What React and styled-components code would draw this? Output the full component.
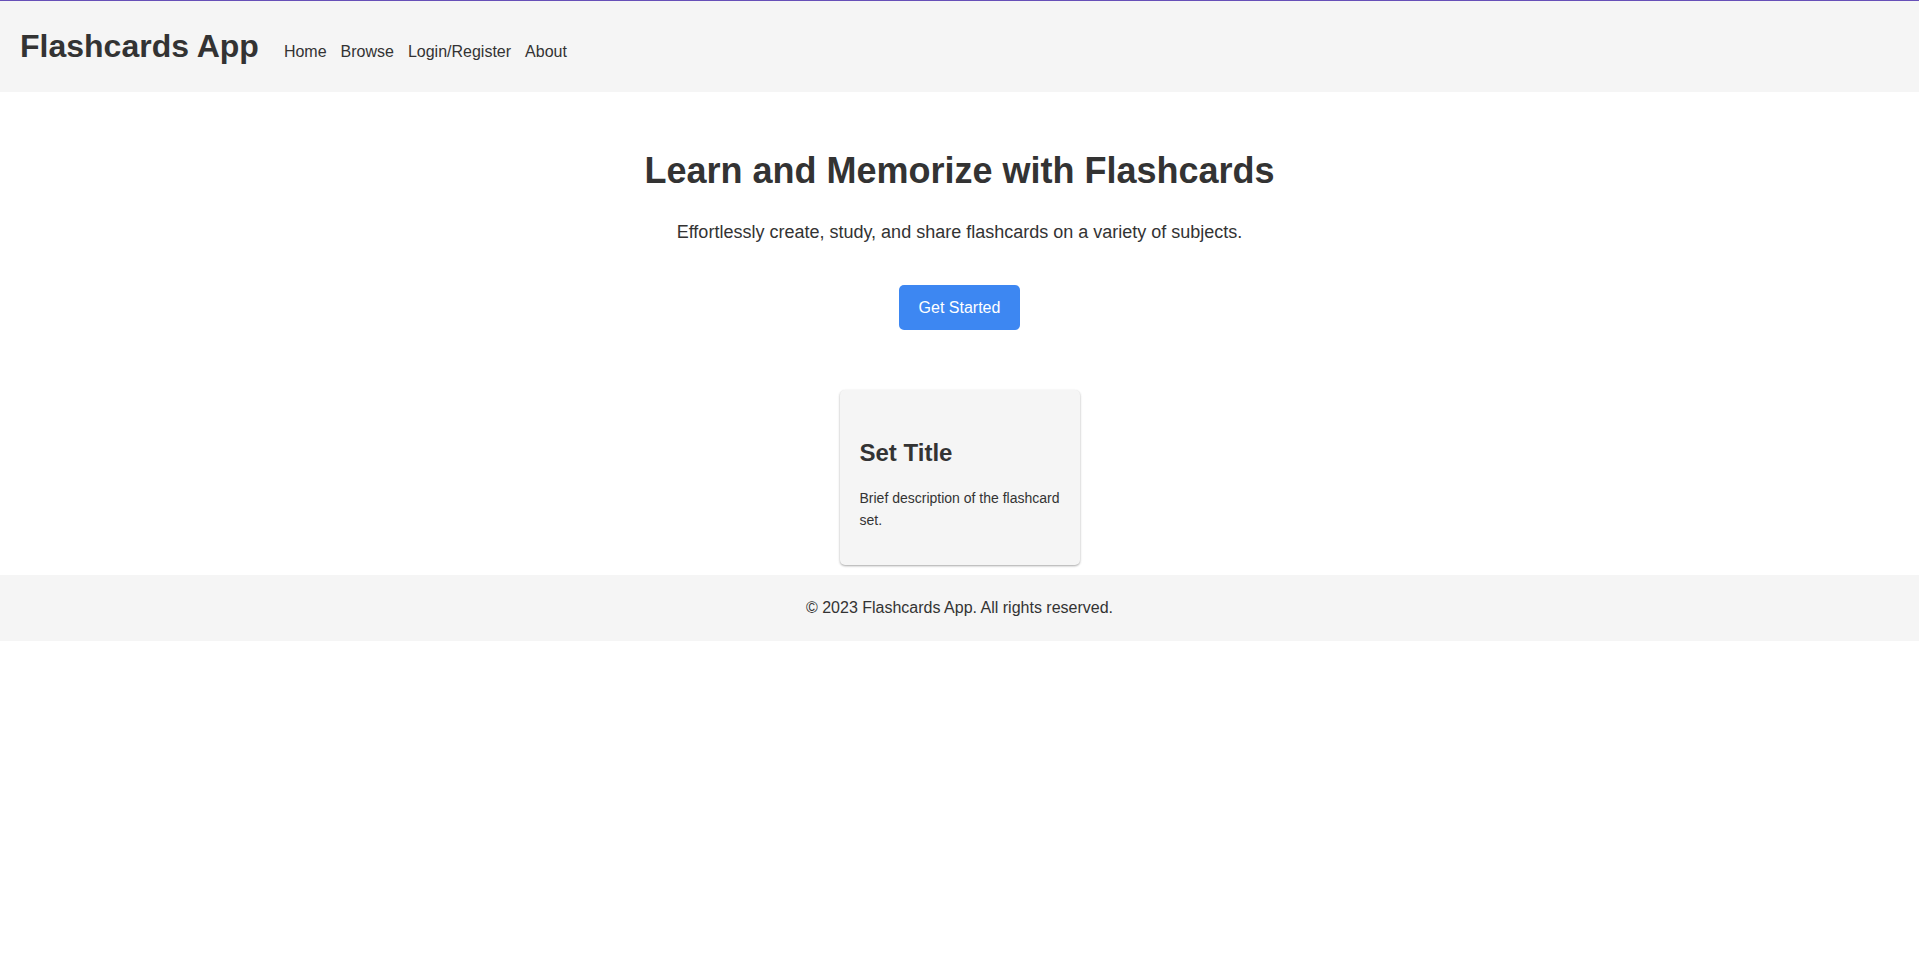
import React from "react";
import styled, { createGlobalStyle } from "styled-components";

const GlobalStyle = createGlobalStyle`
  * {
    box-sizing: border-box;
  }
  body {
    margin: 0;
    background: #ffffff;
    color: #333333;
    font-family: Arial, "Liberation Sans", sans-serif;
    font-size: 16px;
    line-height: 26px;
  }
`;

const Header = styled.header`
  display: flex;
  align-items: baseline;
  gap: 25px;
  padding: 20px;
  border-top: 1px solid #6750b8;
  background: #f5f5f5;
`;

const Brand = styled.h1`
  margin: 0;
  font-size: 32px;
  line-height: 51px;
`;

const Nav = styled.nav`
  display: flex;
  gap: 14px;
`;

const NavLink = styled.a`
  color: inherit;
  text-decoration: none;
`;

const Hero = styled.section`
  display: flex;
  flex-direction: column;
  align-items: center;
  padding: 50px 20px 60px;
  text-align: center;
`;

const HeroTitle = styled.h2`
  margin: 0 0 18px;
  font-size: 36px;
  line-height: 58px;
`;

const HeroText = styled.p`
  margin: 0 0 38px;
  font-size: 18px;
  line-height: 29px;
`;

const Button = styled.button`
  padding: 10px 20px;
  border: none;
  border-radius: 5px;
  background: #3d87f2;
  color: #ffffff;
  font: inherit;
  line-height: 25px;
  cursor: pointer;
`;

const CardList = styled.section`
  display: flex;
  flex-wrap: wrap;
  justify-content: center;
  gap: 20px;
  padding-bottom: 10px;
`;

const Card = styled.article`
  width: 240px;
  padding: 44px 20px 34px;
  border-radius: 5px;
  background: #f5f5f5;
  box-shadow: 0 1px 3px rgba(0, 0, 0, 0.12), 0 1px 2px rgba(0, 0, 0, 0.24);
`;

const CardTitle = styled.h3`
  margin: 0 0 15px;
  font-size: 24px;
  line-height: 38px;
`;

const CardText = styled.p`
  margin: 0;
  font-size: 14px;
  line-height: 22px;
`;

const Footer = styled.footer`
  padding: 20px;
  background: #f5f5f5;
  text-align: center;
`;

const links = ["Home", "Browse", "Login/Register", "About"];

export default function App() {
  return (
    <>
      <GlobalStyle />
      <Header>
        <Brand>Flashcards App</Brand>
        <Nav>
          {links.map((label) => (
            <NavLink key={label} href="#">
              {label}
            </NavLink>
          ))}
        </Nav>
      </Header>
      <main>
        <Hero>
          <HeroTitle>Learn and Memorize with Flashcards</HeroTitle>
          <HeroText>
            Effortlessly create, study, and share flashcards on a variety of
            subjects.
          </HeroText>
          <Button type="button">Get Started</Button>
        </Hero>
        <CardList>
          <Card>
            <CardTitle>Set Title</CardTitle>
            <CardText>Brief description of the flashcard set.</CardText>
          </Card>
        </CardList>
      </main>
      <Footer>© 2023 Flashcards App. All rights reserved.</Footer>
    </>
  );
}
